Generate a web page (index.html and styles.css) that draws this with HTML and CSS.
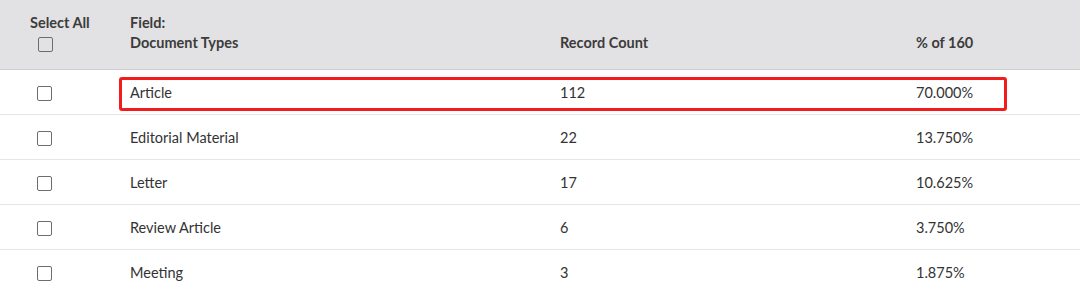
FILE: index.html
```html
<!DOCTYPE html>
<html>
<head>
<meta charset="utf-8">
<link rel="stylesheet" href="styles.css">
</head>
<body>
<div class="table">
  <div class="head">
    <div class="h-sel">
      <span class="h-text">Select All</span>
      <span class="cb cb-head"></span>
    </div>
    <div class="h-field"><span class="h-text">Field:</span><span class="h-text">Document Types</span></div>
    <div class="h-bottom"><span class="h-text">Record Count</span></div>
    <div class="h-bottom"><span class="h-text">% of 160</span></div>
  </div>
  <div class="row highlighted">
    <div class="c-sel"><span class="cb"></span></div>
    <div class="c-field">Article</div>
    <div class="c-count">112</div>
    <div class="c-pct">70.000%</div>
    <div class="mark"></div>
  </div>
  <div class="row">
    <div class="c-sel"><span class="cb"></span></div>
    <div class="c-field">Editorial Material</div>
    <div class="c-count">22</div>
    <div class="c-pct">13.750%</div>
  </div>
  <div class="row">
    <div class="c-sel"><span class="cb"></span></div>
    <div class="c-field">Letter</div>
    <div class="c-count">17</div>
    <div class="c-pct">10.625%</div>
  </div>
  <div class="row">
    <div class="c-sel"><span class="cb"></span></div>
    <div class="c-field">Review Article</div>
    <div class="c-count">6</div>
    <div class="c-pct">3.750%</div>
  </div>
  <div class="row">
    <div class="c-sel"><span class="cb"></span></div>
    <div class="c-field">Meeting</div>
    <div class="c-count">3</div>
    <div class="c-pct">1.875%</div>
  </div>
</div>
</body>
</html>
```

FILE: styles.css
```css
* { box-sizing: border-box; }
html, body { margin: 0; padding: 0; background: #ffffff; }
body {
  font-family: Lato, "Open Sans", "Liberation Sans", sans-serif;
  font-size: 14.5px;
  color: #333333;
  width: 1080px;
}
.table { width: 1080px; }
.head {
  display: grid;
  grid-template-columns: 130px 430px 356px 1fr;
  height: 70px;
  background: #e2e2e4;
  border-bottom: 1px solid #cfcfd1;
  padding-top: 13px;
}
.h-text {
  display: block;
  font-weight: 700;
  line-height: 20px;
  color: #3c3c3c;
}
.h-sel {
  display: flex;
  flex-direction: column;
  padding-left: 30px;
}
.cb {
  display: block;
  width: 15px;
  height: 15px;
  border: 1.5px solid #6d6d6d;
  border-radius: 2px;
  background: #ffffff;
}
.cb-head { margin-top: 4px; margin-left: 8px; background: transparent; }
.h-field { display: flex; flex-direction: column; }
.h-bottom { padding-top: 20px; }
.row {
  position: relative;
  display: grid;
  grid-template-columns: 130px 430px 356px 1fr;
  align-items: center;
  height: 45px;
  padding-top: 2px;
  border-bottom: 1px solid #e6e6e8;
  line-height: 20px;
}
.c-sel { padding-left: 37px; }
.mark {
  position: absolute;
  left: 119px;
  top: 7px;
  width: 888px;
  height: 34px;
  border: 3px solid #f11d1d;
  border-radius: 3px;
  pointer-events: none;
}
```
